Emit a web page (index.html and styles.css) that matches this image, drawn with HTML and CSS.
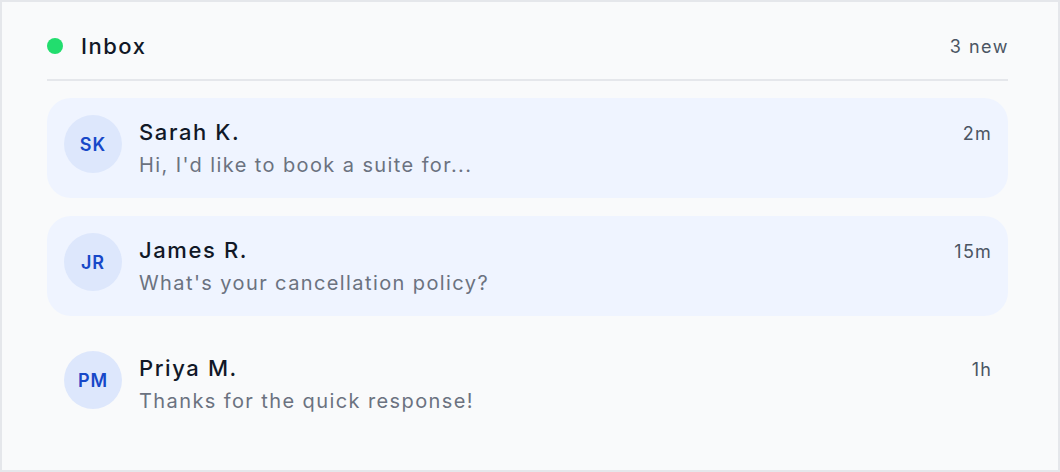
FILE: index.html
```html
<!DOCTYPE html>
<html lang="en">
<head>
<meta charset="utf-8">
<title>Inbox</title>
<link rel="stylesheet" href="styles.css">
</head>
<body>
<div class="frame">
  <div class="card">
    <div class="header">
      <div class="title">
        <span class="dot"></span>
        <span class="title-text">Inbox</span>
      </div>
      <span class="count">3 new</span>
    </div>
    <div class="list">
      <div class="item unread">
        <div class="avatar">SK</div>
        <div class="body">
          <div class="row"><span class="name">Sarah K.</span><span class="time">2m</span></div>
          <div class="preview">Hi, I'd like to book a suite for...</div>
        </div>
      </div>
      <div class="item unread">
        <div class="avatar">JR</div>
        <div class="body">
          <div class="row"><span class="name">James R.</span><span class="time">15m</span></div>
          <div class="preview">What's your cancellation policy?</div>
        </div>
      </div>
      <div class="item">
        <div class="avatar">PM</div>
        <div class="body">
          <div class="row"><span class="name">Priya M.</span><span class="time">1h</span></div>
          <div class="preview">Thanks for the quick response!</div>
        </div>
      </div>
    </div>
  </div>
</div>
</body>
</html>
```

FILE: styles.css
```css
* { box-sizing: border-box; }
html, body { margin: 0; padding: 0; }
body {
  font-family: Inter, "Noto Sans", "Liberation Sans", sans-serif;
  background: #f9fafb;
}
.frame {
  width: 1060px;
  height: 472px;
  border: 2px solid #e5e7eb;
  background: #f9fafb;
  padding: 0 50px 0 45px;
}
.card {
  padding-top: 28px;
}
.header {
  display: flex;
  align-items: center;
  justify-content: space-between;
  height: 32px;
  margin-bottom: 17px;
}
.title {
  display: flex;
  align-items: center;
  gap: 18px;
}
.dot {
  width: 16px;
  height: 16px;
  border-radius: 50%;
  background: #22dd6e;
}
.title-text {
  font-size: 22px;
  font-weight: 500;
  color: #111827;
  letter-spacing: 1.5px;
}
.count {
  font-size: 18px;
  color: #4b5563;
  letter-spacing: 1.5px;
  margin-right: -1px;
}
.list {
  border-top: 2px solid #e5e7eb;
  padding-top: 17px;
  display: flex;
  flex-direction: column;
  gap: 18px;
}
.item {
  display: flex;
  align-items: flex-start;
  gap: 17px;
  height: 100px;
  padding: 17px;
  border-radius: 24px;
}
.item.unread {
  background: #eff4ff;
}
.avatar {
  width: 58px;
  height: 58px;
  border-radius: 50%;
  background: #dde7fc;
  color: #1748c8;
  font-size: 18px;
  font-weight: 600;
  letter-spacing: 1px;
  display: flex;
  align-items: center;
  justify-content: center;
  flex: none;
}
.body {
  flex: 1;
  display: flex;
  flex-direction: column;
  gap: 7px;
  padding-top: 4px;
}
.row {
  display: flex;
  justify-content: space-between;
  align-items: baseline;
}
.name {
  font-size: 22px;
  font-weight: 500;
  color: #111827;
  line-height: 26px;
  letter-spacing: 1.6px;
}
.time {
  font-size: 18px;
  color: #4b5563;
  letter-spacing: 1.2px;
  margin-right: -1px;
}
.preview {
  font-size: 20px;
  color: #6b7280;
  line-height: 26px;
  letter-spacing: 1.4px;
}
```
